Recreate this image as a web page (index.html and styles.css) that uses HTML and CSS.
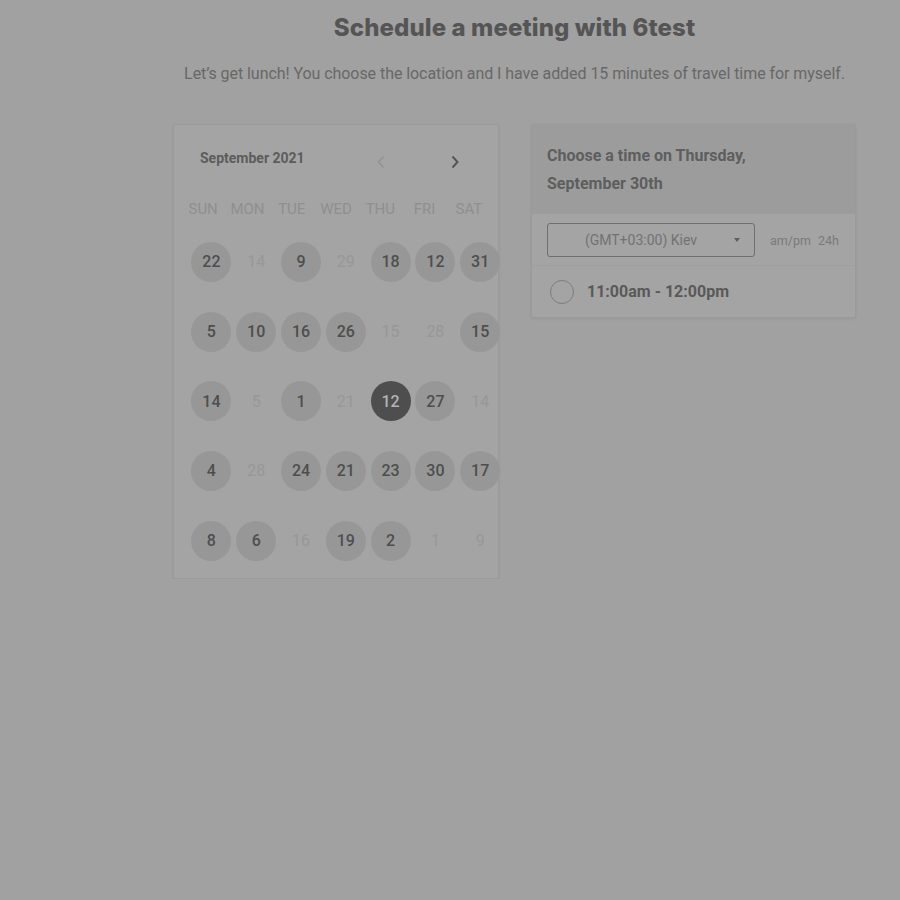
FILE: index.html
```html
<!DOCTYPE html>
<html>
<head>
<meta charset="utf-8">
<link rel="stylesheet" href="styles.css">
</head>
<body>
<div class="page">
  <h1 class="title">Schedule a meeting with 6test</h1>
  <p class="subtitle">Let’s get lunch! You choose the location and I have added 15 minutes of travel time for myself.</p>
  <div class="cards">
    <div class="card cal">
      <div class="cal-head">
        <span class="month">September 2021</span>
        <span class="nav prev"><svg width="10" height="14" viewBox="0 0 10 14"><path d="M7.5 1.5 L2.5 7 L7.5 12.5" fill="none" stroke="currentColor" stroke-width="1.6"/></svg></span>
        <span class="nav next"><svg width="10" height="14" viewBox="0 0 10 14"><path d="M2.5 1.5 L7.5 7 L2.5 12.5" fill="none" stroke="currentColor" stroke-width="2"/></svg></span>
      </div>
      <div class="dow">
        <span>SUN</span><span>MON</span><span>TUE</span><span>WED</span><span>THU</span><span>FRI</span><span>SAT</span>
      </div>
      <div class="days">
        <div class="cell"><span class="d on">22</span></div>
        <div class="cell"><span class="d off">14</span></div>
        <div class="cell"><span class="d on">9</span></div>
        <div class="cell"><span class="d off">29</span></div>
        <div class="cell"><span class="d on">18</span></div>
        <div class="cell"><span class="d on">12</span></div>
        <div class="cell"><span class="d on">31</span></div>

        <div class="cell"><span class="d on">5</span></div>
        <div class="cell"><span class="d on">10</span></div>
        <div class="cell"><span class="d on">16</span></div>
        <div class="cell"><span class="d on">26</span></div>
        <div class="cell"><span class="d off">15</span></div>
        <div class="cell"><span class="d off">28</span></div>
        <div class="cell"><span class="d on">15</span></div>

        <div class="cell"><span class="d on">14</span></div>
        <div class="cell"><span class="d off">5</span></div>
        <div class="cell"><span class="d on">1</span></div>
        <div class="cell"><span class="d off">21</span></div>
        <div class="cell"><span class="d sel">12</span></div>
        <div class="cell"><span class="d on">27</span></div>
        <div class="cell"><span class="d off">14</span></div>

        <div class="cell"><span class="d on">4</span></div>
        <div class="cell"><span class="d off">28</span></div>
        <div class="cell"><span class="d on">24</span></div>
        <div class="cell"><span class="d on">21</span></div>
        <div class="cell"><span class="d on">23</span></div>
        <div class="cell"><span class="d on">30</span></div>
        <div class="cell"><span class="d on">17</span></div>

        <div class="cell"><span class="d on">8</span></div>
        <div class="cell"><span class="d on">6</span></div>
        <div class="cell"><span class="d off">16</span></div>
        <div class="cell"><span class="d on">19</span></div>
        <div class="cell"><span class="d on">2</span></div>
        <div class="cell"><span class="d off">1</span></div>
        <div class="cell"><span class="d off">9</span></div>
      </div>
    </div>
    <div class="card times">
      <div class="times-head">Choose a time on Thursday, September 30th</div>
      <div class="tz-row">
        <div class="select"><span class="select-text">(GMT+03:00) Kiev</span><span class="caret"></span></div>
        <span class="fmt">am/pm</span><span class="fmt">24h</span>
      </div>
      <div class="slot">
        <span class="radio"></span>
        <span class="slot-text">11:00am - 12:00pm</span>
      </div>
    </div>
  </div>
</div>
</body>
</html>
```
FILE: styles.css
```css
html, body {
  margin: 0;
  padding: 0;
  background: #a1a1a1;
  font-family: Roboto, "Liberation Sans", sans-serif;
}

.page {
  padding: 13px 0 0 129px;
}

.title {
  margin: 0;
  font-family: Inter, Roboto, sans-serif;
  font-size: 24px;
  line-height: 30px;
  font-weight: 800;
  letter-spacing: 0.1px;
  color: #555555;
  text-align: center;
}

.subtitle {
  margin: 21px 0 0;
  font-size: 16px;
  line-height: 20px;
  letter-spacing: -0.06px;
  color: #686868;
  text-align: center;
}

.cards {
  margin-top: 40px;
  display: flex;
  justify-content: center;
  align-items: flex-start;
  gap: 32px;
}

.card {
  background: #a4a4a4;
  border: 1px solid #9a9a9a;
  border-radius: 2px;
  box-shadow: 0 1px 3px rgba(0, 0, 0, 0.06);
  box-sizing: border-box;
}

.cal {
  width: 326px;
  height: 455px;
  padding: 22px 0 0 15px;
}

.cal-head {
  display: flex;
  align-items: center;
  height: 22px;
  padding-left: 11px;
}

.month {
  font-size: 14px;
  font-weight: 700;
  color: #5c5c5c;
  width: 176px;
}

.nav {
  display: flex;
  margin-top: 8px;
}

.prev {
  color: #939393;
  margin-left: 0;
}

.next {
  color: #555555;
  margin-left: 64px;
}

.dow {
  margin-top: 30px;
  display: grid;
  grid-template-columns: repeat(7, 44.3px);
  margin-left: -8px;
  height: 20px;
  line-height: 20px;
  font-size: 15px;
  color: #8f8f8f;
}

.dow span {
  text-align: center;
}

.days {
  margin-top: 8px;
  display: grid;
  grid-template-columns: repeat(7, 44.8px);
  grid-auto-rows: 69.7px;
}

.cell {
  display: flex;
  align-items: center;
  justify-content: center;
}

.d {
  width: 40px;
  height: 40px;
  border-radius: 50%;
  display: flex;
  align-items: center;
  justify-content: center;
  font-size: 16px;
  font-weight: 500;
}

.on {
  background: #979797;
  color: #4e4e4e;
}

.off {
  color: #979797;
  font-weight: 400;
}

.sel {
  background: #4e4e4e;
  color: #b4b4b4;
}

.times {
  width: 325px;
}

.times-head {
  background: #9c9c9c;
  padding: 17px 100px 16px 15px;
  font-size: 16px;
  line-height: 28px;
  font-weight: 700;
  color: #5e5e5e;
}

.tz-row {
  display: flex;
  align-items: center;
  padding: 9px 14px 8px 15px;
  border-bottom: 1px solid #a0a0a0;
}

.select {
  box-sizing: border-box;
  width: 208px;
  height: 34px;
  border: 1px solid #6f6f6f;
  border-radius: 3px;
  display: flex;
  align-items: center;
  padding: 0 14px 0 0;
}

.select-text {
  flex: 1;
  text-align: center;
  font-size: 14px;
  color: #727272;
}

.caret {
  width: 0;
  height: 0;
  border-left: 3.5px solid transparent;
  border-right: 3.5px solid transparent;
  border-top: 4px solid #5e5e5e;
}

.fmt {
  font-size: 12.5px;
  color: #7a7a7a;
  margin-left: 15px;
}

.fmt + .fmt {
  margin-left: 7px;
}

.slot {
  display: flex;
  align-items: center;
  height: 51px;
  padding-left: 18px;
}

.radio {
  box-sizing: border-box;
  width: 24px;
  height: 24px;
  border-radius: 50%;
  border: 1.5px solid #7d7d7d;
}

.slot-text {
  margin-left: 13px;
  font-size: 16px;
  font-weight: 700;
  color: #595959;
}
```
